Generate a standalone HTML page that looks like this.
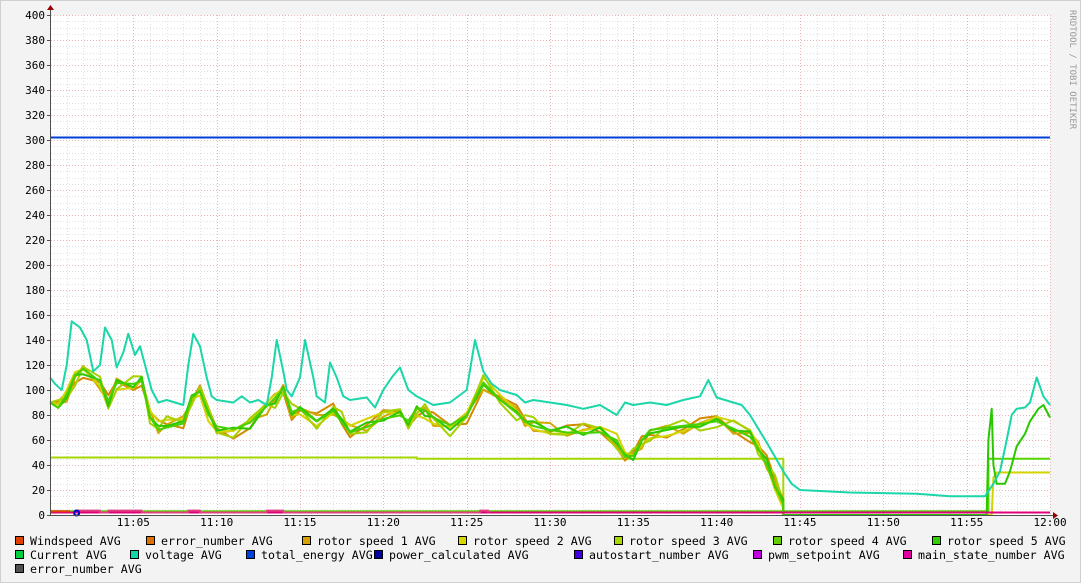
<!DOCTYPE html>
<html><head><meta charset="utf-8"><style>
html,body{margin:0;padding:0;background:#f3f3f3;}
svg{display:block;}
text{font-family:"DejaVu Sans Mono","Liberation Mono",monospace;}
</style></head><body>
<svg id="s" width="1081" height="583" xmlns="http://www.w3.org/2000/svg">
<rect x="0" y="0" width="1081" height="583" fill="#f3f3f3"/>
<rect x="0.5" y="0.5" width="1080" height="582" fill="none" stroke="#cfcfcf"/>
<rect x="51" y="15" width="999" height="500" fill="#ffffff"/>
<g id="grid"></g>
<g id="data" fill="none" stroke-width="2" stroke-linejoin="round"></g>
<line x1="50.5" y1="10" x2="50.5" y2="516" stroke="#505050"/>
<line x1="47" y1="515.5" x2="1054" y2="515.5" stroke="#505050"/>
<polygon points="47,10 54,10 50.5,5" fill="#900"/>
<polygon points="1053,512 1053,519 1058,515.5" fill="#900"/>
<g id="lab" font-size="11" fill="#000"></g>
<text x="0" y="0" font-size="9" fill="#999" transform="translate(1070,10) rotate(90)">RRDTOOL / TOBI OETIKER</text>
<g id="leg" font-size="11.6" fill="#000"></g>
</svg>
<script>
const NS="http://www.w3.org/2000/svg";
function el(p,t,a,txt){const e=document.createElementNS(NS,t);for(const k in a)e.setAttribute(k,a[k]);if(txt!==undefined)e.textContent=txt;document.getElementById(p).appendChild(e);return e;}
const X=m=>50+m*16.667, Y=v=>515-v*1.25;
for(let v=5;v<=400;v+=5){const y=Math.round(Y(v))+.5;const maj=v%20==0;
 el("grid","line",{x1:51,x2:1050,y1:y,y2:y,stroke:maj?"#eab4b4":"#e0e0e0","stroke-dasharray":"1,2"});}
for(let m=1;m<=60;m++){const x=Math.round(X(m))+.5;const maj=m%5==0;
 el("grid","line",{x1:x,x2:x,y1:15,y2:515,stroke:maj?"#eab4b4":"#e0e0e0","stroke-dasharray":"1,2"});}
for(let v=0;v<=400;v+=20){el("lab","text",{x:45,y:Y(v)+4,"text-anchor":"end"},String(v));
 el("grid","line",{x1:47,x2:51,y1:Math.round(Y(v))+.5,y2:Math.round(Y(v))+.5,stroke:"#505050"});}
for(let m=5;m<=60;m+=5){const h=m==60?"12:00":"11:"+String(m).padStart(2,"0");
 el("lab","text",{x:X(m),y:526,"text-anchor":"middle"},h);}
function line(pts,c,w){el("data","polyline",{points:pts.map(p=>X(p[0]).toFixed(1)+","+Y(p[1]).toFixed(1)).join(" "),stroke:c,"stroke-width":w||2});}
const rot=[[0,90],[0.5,85],[1,95],[1.5,110],[2,115],[3,105],[3.5,90],[4,105],[5,105],[5.5,108],[6,80],[6.5,70],[7,72],[8,75],[8.5,95],[9,100],[9.5,80],[10,70],[11,67],[12,72],[13,85],[13.5,92],[14,100],[14.5,82],[15,85],[16,76],[17,85],[17.5,76],[18,68],[19,72],[20,78],[21,80],[21.5,75],[22,84],[22.5,82],[23,76],[24,70],[25,78],[26,105],[27,92],[28,82],[28.5,76],[29,73],[30,70],[31,68],[32,67],[33,67],[34,60],[34.5,46],[35,46],[35.5,58],[36,66],[37,68],[38,70],[39,72],[40,75],[41,70],[42,64],[42.5,55],[43,42],[43.5,25],[44,10],[44,0]];
function vary(d,s){return rot.map((p,i)=>[p[0],Math.max(0,p[1]+(p[1]>5?d*Math.sin(i*s):0))]);}
line([[0,46],[22,46],[22,45],[44,45],[44,0]],"#a6d600");
line([[0,3],[56,3],[56.3,3],[56.3,45],[60,45]],"#55d600");
line(vary(6,1.3),"#d48a00");
line(vary(5,2.1),"#d4a800");
line(vary(5,0.7).concat([[44,0],[56.5,0],[56.6,30],[56.8,34],[60,34]]),"#d4d400");
line(vary(7,1.7),"#a6d000");
line(vary(3,2.9).concat([[44,0],[56.2,0],[56.3,60],[56.5,85],[56.6,40],[56.8,25],[57.3,25],[57.6,35],[58,55],[58.5,65],[58.8,75],[59.3,85],[59.6,88],[60,78]]),"#28c800");
line(vary(2,0.4),"#47d000");
line([[0,110],[0.3,105],[0.7,100],[1,120],[1.3,155],[1.8,150],[2.2,140],[2.6,115],[3,120],[3.3,150],[3.7,140],[4,118],[4.4,130],[4.7,145],[5.1,128],[5.4,135],[5.8,115],[6.1,100],[6.5,90],[7,92],[8,88],[8.3,120],[8.6,145],[9,135],[9.4,110],[9.7,95],[10,92],[11,90],[11.5,95],[12,90],[12.5,92],[13,88],[13.3,110],[13.6,140],[14,115],[14.2,100],[14.5,95],[15,110],[15.3,140],[15.8,110],[16,95],[16.5,90],[16.8,122],[17.2,110],[17.6,95],[18,92],[19,94],[19.5,86],[20,100],[20.5,110],[21,118],[21.5,100],[22,95],[23,88],[24,90],[25,100],[25.5,140],[26,115],[26.5,105],[27,100],[28,96],[28.5,90],[29,92],[30,90],[31,88],[32,85],[33,88],[34,80],[34.5,90],[35,88],[36,90],[37,88],[38,92],[39,95],[39.5,108],[40,94],[41,90],[41.5,88],[42,80],[43,58],[44,35],[44.5,25],[45,20],[48,18],[52,17],[54,15],[56.1,15],[56.6,25],[57,35],[57.4,60],[57.7,80],[58,85],[58.5,86],[58.8,90],[59.2,110],[59.6,95],[60,88]],"#1ad6a8");
line([[0,302],[60,302]],"#0040d8");
line([[0,2],[60,2]],"#e0007a");
line([[1.5,3.5],[3,3.5],[3,2],[3.5,2],[3.5,3.5],[5.5,3.5],[5.5,2],[8.3,2],[8.3,3.5],[9,3.5],[9,2],[13,2],[13,3.5],[14,3.5],[14,2],[25.8,2],[25.8,3.5],[26.3,3.5],[26.3,2]],"#e04080");
line([[0,3],[1.2,3]],"#e04000");
el("data","circle",{cx:X(1.6),cy:513,r:2.5,stroke:"#0000c0","stroke-width":2});
const L=[[15,541,"#e04000","Windspeed AVG"],[146,541,"#e07000","error_number AVG"],[302,541,"#d8a000","rotor speed 1 AVG"],[458,541,"#d8d800","rotor speed 2 AVG"],[614,541,"#a8d800","rotor speed 3 AVG"],[773,541,"#60d000","rotor speed 4 AVG"],[932,541,"#30d000","rotor speed 5 AVG"],
[15,555,"#00d040","Current AVG"],[130,555,"#10d8a8","voltage AVG"],[246,555,"#0040e0","total_energy AVG"],[374,555,"#0000a0","power_calculated AVG"],[574,555,"#4000e0","autostart_number AVG"],[753,555,"#c000e0","pwm_setpoint AVG"],[903,555,"#e000a0","main_state_number AVG"],[15,569,"#505050","error_number AVG"]];
for(const [x,y,c,t] of L){el("leg","rect",{x:x+.5,y:y-4.5,width:8,height:8,fill:c,stroke:"#000"});el("leg","text",{x:x+15,y:y+4},t);}
</script>
</body></html>
